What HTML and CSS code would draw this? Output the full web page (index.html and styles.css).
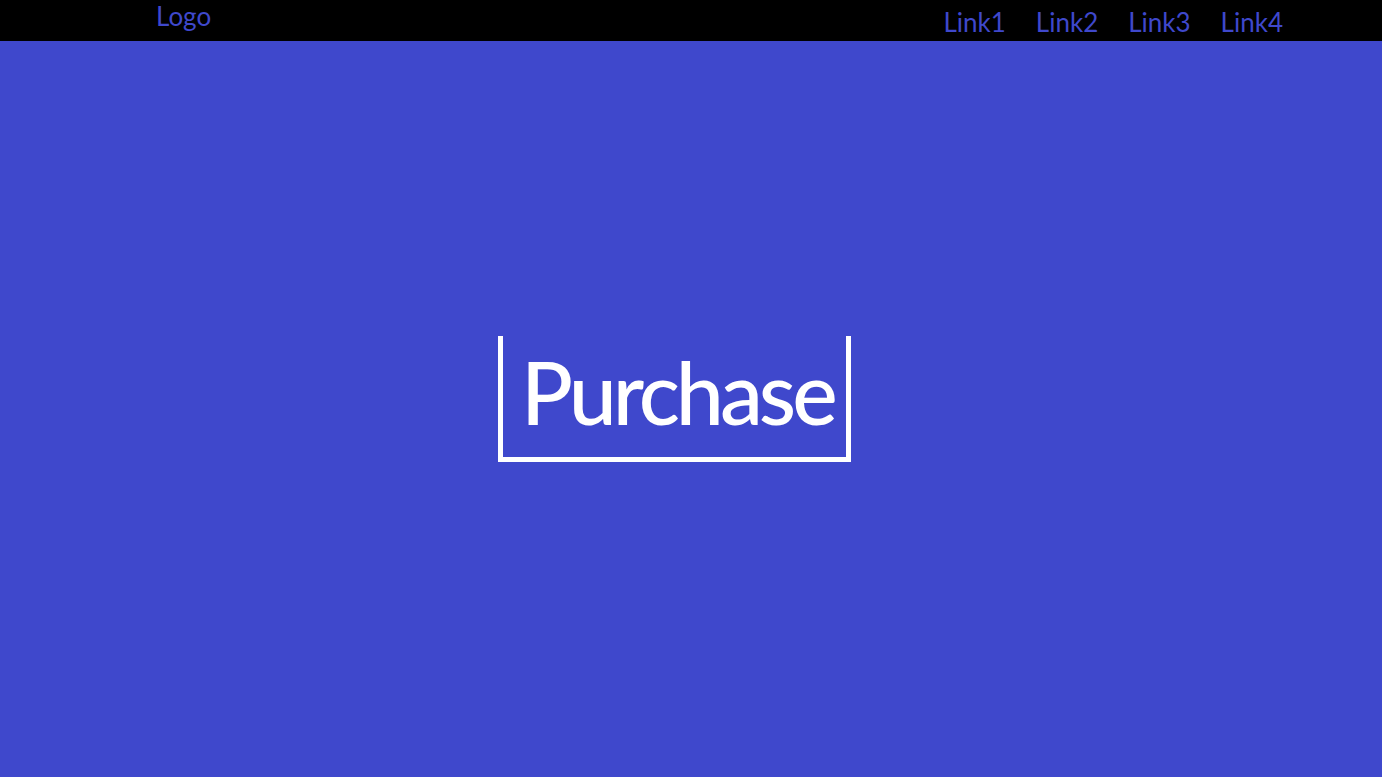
FILE: index.html
```html
<!DOCTYPE html>
<html>
<head>
<meta charset="utf-8">
<link rel="stylesheet" href="styles.css">
</head>
<body>
<header class="topbar">
  <div class="logo">Logo</div>
  <nav class="links">
    <a href="#">Link1</a>
    <a href="#">Link2</a>
    <a href="#">Link3</a>
    <a href="#">Link4</a>
  </nav>
</header>
<main class="hero">
  <div class="purchase">Purchase</div>
</main>
</body>
</html>
```
FILE: styles.css
```css
html, body {
  margin: 0;
  padding: 0;
  height: 100%;
}
body {
  background: #3f48cc;
  font-family: Lato, "Open Sans", sans-serif;
  display: flex;
  flex-direction: column;
}
.topbar {
  height: 41px;
  flex: none;
  background: #000;
  display: flex;
  justify-content: space-between;
  align-items: flex-start;
  padding: 0 99px 0 156px;
  box-sizing: border-box;
}
.logo {
  color: #3f48cc;
  font-size: 26px;
  line-height: 31px;
  padding-top: 1px;
}
.links {
  display: flex;
  gap: 30px;
  padding-top: 7px;
}
.links a {
  color: #3f48cc;
  text-decoration: none;
  font-size: 26px;
  line-height: 31px;
}
.hero {
  flex: 1;
  display: flex;
  justify-content: center;
  align-items: center;
  padding: 0 33px 20px 0;
}
.purchase {
  color: #fff;
  font-size: 86px;
  font-weight: 500;
  letter-spacing: -4px;
  line-height: 88px;
  width: 353px;
  box-sizing: border-box;
  padding: 12px 0 21px 18px;
  border: 5px solid #fff;
  border-top: none;
  white-space: nowrap;
}
```
